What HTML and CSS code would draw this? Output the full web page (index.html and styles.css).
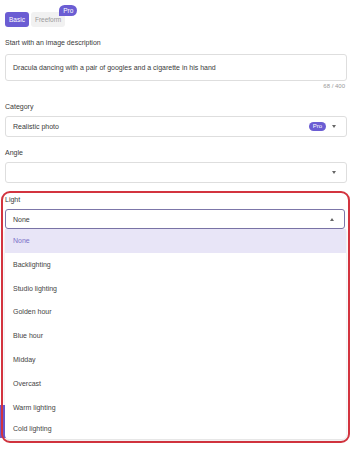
FILE: index.html
```html
<!DOCTYPE html>
<html>
<head>
  <title>Image prompt</title>
  <link rel="stylesheet" href="styles.css">
</head>
<body>
  <div class="page">
    <div class="tabs">
      <button class="tab active">Basic</button>
      <button class="tab">Freeform<span class="pro-badge tab-pro">Pro</span></button>
    </div>

    <div class="label">Start with an image description</div>
    <div class="textbox">Dracula dancing with a pair of googles and a cigarette in his hand</div>
    <div class="counter">68 / 400</div>

    <div class="label">Category</div>
    <div class="select">
      <span class="select-value">Realistic photo</span>
      <span class="pro-badge">Pro</span>
      <span class="arrow"></span>
    </div>

    <div class="label">Angle</div>
    <div class="select">
      <span class="select-value"></span>
      <span class="arrow"></span>
    </div>

    <div class="peek"></div>

    <div class="highlight">
      <div class="label light-label">Light</div>
      <div class="select open">
        <span class="select-value">None</span>
        <span class="arrow up"></span>
      </div>
      <ul class="menu">
        <li class="selected">None</li>
        <li>Backlighting</li>
        <li>Studio lighting</li>
        <li>Golden hour</li>
        <li>Blue hour</li>
        <li>Midday</li>
        <li>Overcast</li>
        <li>Warm lighting</li>
        <li class="last">Cold lighting</li>
      </ul>
    </div>
  </div>
</body>
</html>
```

FILE: styles.css
```css
body {
  margin: 0;
  font-family: "Liberation Sans", Arial, sans-serif;
  font-size: 7px;
  color: #3a3a3a;
  background: #fff;
}
.page {
  position: relative;
  padding: 12px 6px 0 5px;
}
.tabs {
  display: flex;
  gap: 2px;
  margin-bottom: 11px;
}
.tab {
  position: relative;
  font-family: inherit;
  font-size: 6.5px;
  border: none;
  border-radius: 3px;
  padding: 0 4px;
  height: 15px;
  background: #f1f1f1;
  color: #9a9a9a;
}
.tab.active {
  background: #6b5dd3;
  color: #fff;
}
.pro-badge {
  display: inline-block;
  background: #6b5dd3;
  color: #fff;
  font-size: 6px;
  line-height: 9px;
  padding: 0 4px;
  border-radius: 5px;
}
.tab-pro {
  position: absolute;
  top: -7px;
  right: -12px;
  font-size: 6.5px;
  line-height: 11px;
  padding: 0 4px;
  border-radius: 6px 6px 6px 0;
}
.label {
  margin-bottom: 4px;
  line-height: 10px;
}
.textbox {
  border: 1px solid #dedede;
  border-radius: 3px;
  height: 25px;
  line-height: 25px;
  padding: 0 7px;
  margin-top: 6px;
}
.counter {
  text-align: right;
  color: #999;
  font-size: 6px;
  margin: 2px 2px 13px 0;
}
.select {
  display: flex;
  align-items: center;
  gap: 6px;
  border: 1px solid #dedede;
  border-radius: 3px;
  height: 19px;
  padding: 0 10px 0 7px;
  margin-bottom: 11px;
}
.select-value {
  flex: 1;
}
.arrow {
  width: 0;
  height: 0;
  border-left: 2.5px solid transparent;
  border-right: 2.5px solid transparent;
  border-top: 3px solid #666;
}
.arrow.up {
  border-top: none;
  border-bottom: 3px solid #666;
}
.highlight {
  position: relative;
  margin: -3px -3px 0 -4px;
  border: 2px solid #d3343f;
  border-radius: 9px;
  padding: 2px;
}
.light-label {
  margin: 0 0 4px 0;
  background: #fff;
}
.select.open {
  height: 18px;
  border-color: #7c76a9;
  margin-bottom: 0;
  margin-right: 1px;
  background: #fff;
}
.menu {
  list-style: none;
  margin: 0;
  padding: 0;
  background: #fff;
  color: #444;
  border-radius: 0 0 4px 4px;
  box-shadow: 0 1px 3px rgba(0, 0, 0, 0.15);
}
.menu li {
  height: 23.8px;
  line-height: 23.8px;
  padding-left: 8px;
}
.menu li.last {
  height: 20px;
  line-height: 20px;
}
.menu li.selected {
  background: #e8e5f7;
  color: #7b70c8;
}
.peek {
  position: absolute;
  left: 0;
  top: 405px;
  width: 6px;
  height: 33px;
  background: #6b5dd3;
}
```
